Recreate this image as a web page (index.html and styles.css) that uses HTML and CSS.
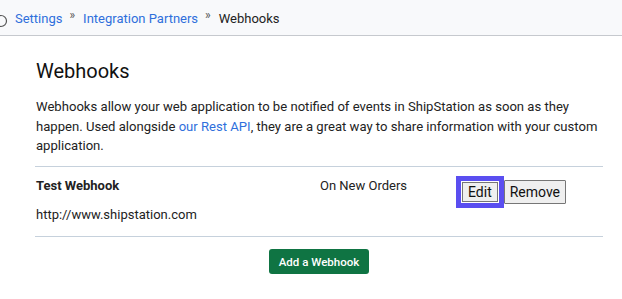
FILE: index.html
```html
<!DOCTYPE html>
<html>
<head>
<meta charset="utf-8">
<link rel="stylesheet" href="styles.css">
</head>
<body>
<header class="topbar">
  <svg class="corner-icon" width="14" height="14" viewBox="0 0 14 14"><circle cx="7" cy="7" r="5.5" fill="none" stroke="#555" stroke-width="1.2"/></svg>
  <nav class="crumbs">
    <a class="crumb-link" href="#">Settings</a>
    <span class="sep">»</span>
    <a class="crumb-link" href="#">Integration Partners</a>
    <span class="sep">»</span>
    <span class="crumb-current">Webhooks</span>
  </nav>
</header>
<main class="content">
  <h1 class="title">Webhooks</h1>
  <p class="intro">Webhooks allow your web application to be notified of events in ShipStation as soon as they happen. Used alongside <a class="link" href="#">our Rest API</a>, they are a great way to share information with your custom application.</p>
  <div class="hook">
    <div class="hook-row">
      <div class="hook-name">Test Webhook</div>
      <div class="hook-event">On New Orders</div>
      <div class="hook-actions">
        <button class="btn btn-focus">Edit</button>
        <button class="btn">Remove</button>
      </div>
    </div>
    <div class="hook-url">http://www.shipstation.com</div>
  </div>
  <div class="add-wrap">
    <button class="btn-add">Add a Webhook</button>
  </div>
</main>
</body>
</html>
```
FILE: styles.css
```css
html, body {
  margin: 0;
  padding: 0;
  background: #fff;
  font-family: Roboto, "Liberation Sans", Arial, sans-serif;
  color: #222;
}
.topbar {
  position: relative;
  height: 35px;
  background: #f8f9fb;
  border-bottom: 1px solid #c6c9ce;
  display: flex;
  align-items: center;
  padding-left: 15px;
  overflow: hidden;
}
.corner-icon {
  position: absolute;
  left: -6px;
  top: 14px;
}
.crumbs {
  display: flex;
  align-items: center;
  font-size: 13px;
  margin-top: 1px;
}
.crumb-link {
  color: #2f6fdc;
  text-decoration: none;
}
.sep {
  font-size: 12px;
  color: #555;
  margin: 0 8px 0 7px;
  position: relative;
  top: -3px;
}
.crumb-current {
  color: #222;
}
.content {
  margin-left: 35px;
  width: 568px;
  padding-top: 23px;
}
.title {
  margin: 0;
  font-size: 20px;
  font-weight: 400;
  line-height: 24px;
  padding-left: 1px;
  color: #111;
}
.intro {
  margin: 14px 0 0;
  padding-left: 1px;
  font-size: 13.1px;
  line-height: 19.5px;
}
.link {
  color: #2f6fdc;
  text-decoration: none;
}
.hook {
  margin-top: 10px;
  border-top: 1px solid #c6d1dc;
  border-bottom: 1px solid #c6d1dc;
  padding: 9px 0 12px 1px;
  font-size: 13px;
  line-height: 19.5px;
}
.hook-row {
  display: grid;
  grid-template-columns: 284px 137px 1fr;
  align-items: start;
}
.hook-name {
  font-weight: 700;
}
.hook-actions {
  display: flex;
  align-items: center;
  padding-top: 4px;
}
.btn {
  font-family: Roboto, "Liberation Sans", Arial, sans-serif;
  font-size: 14px;
  line-height: 20px;
  height: 24px;
  padding: 0 5px;
  background: #efefef;
  border: 1px solid #767676;
  border-radius: 1px;
  color: #111;
}
.btn-focus {
  height: 20px;
  line-height: 16px;
  padding: 0 5px;
  margin: 0 6px 0 5px;
  border-radius: 0;
  box-shadow: 0 0 0 1px #fff, 0 0 0 6px #5a4ef0;
}
.hook-url {
  margin-top: 1px;
}
.add-wrap {
  display: flex;
  justify-content: center;
  margin-top: 12px;
}
.btn-add {
  height: 25px;
  padding: 0 10px;
  background: #0f7443;
  color: #fff;
  border: 0;
  border-radius: 3px;
  font-family: Roboto, "Liberation Sans", Arial, sans-serif;
  font-size: 11.5px;
  font-weight: 500;
}
```
